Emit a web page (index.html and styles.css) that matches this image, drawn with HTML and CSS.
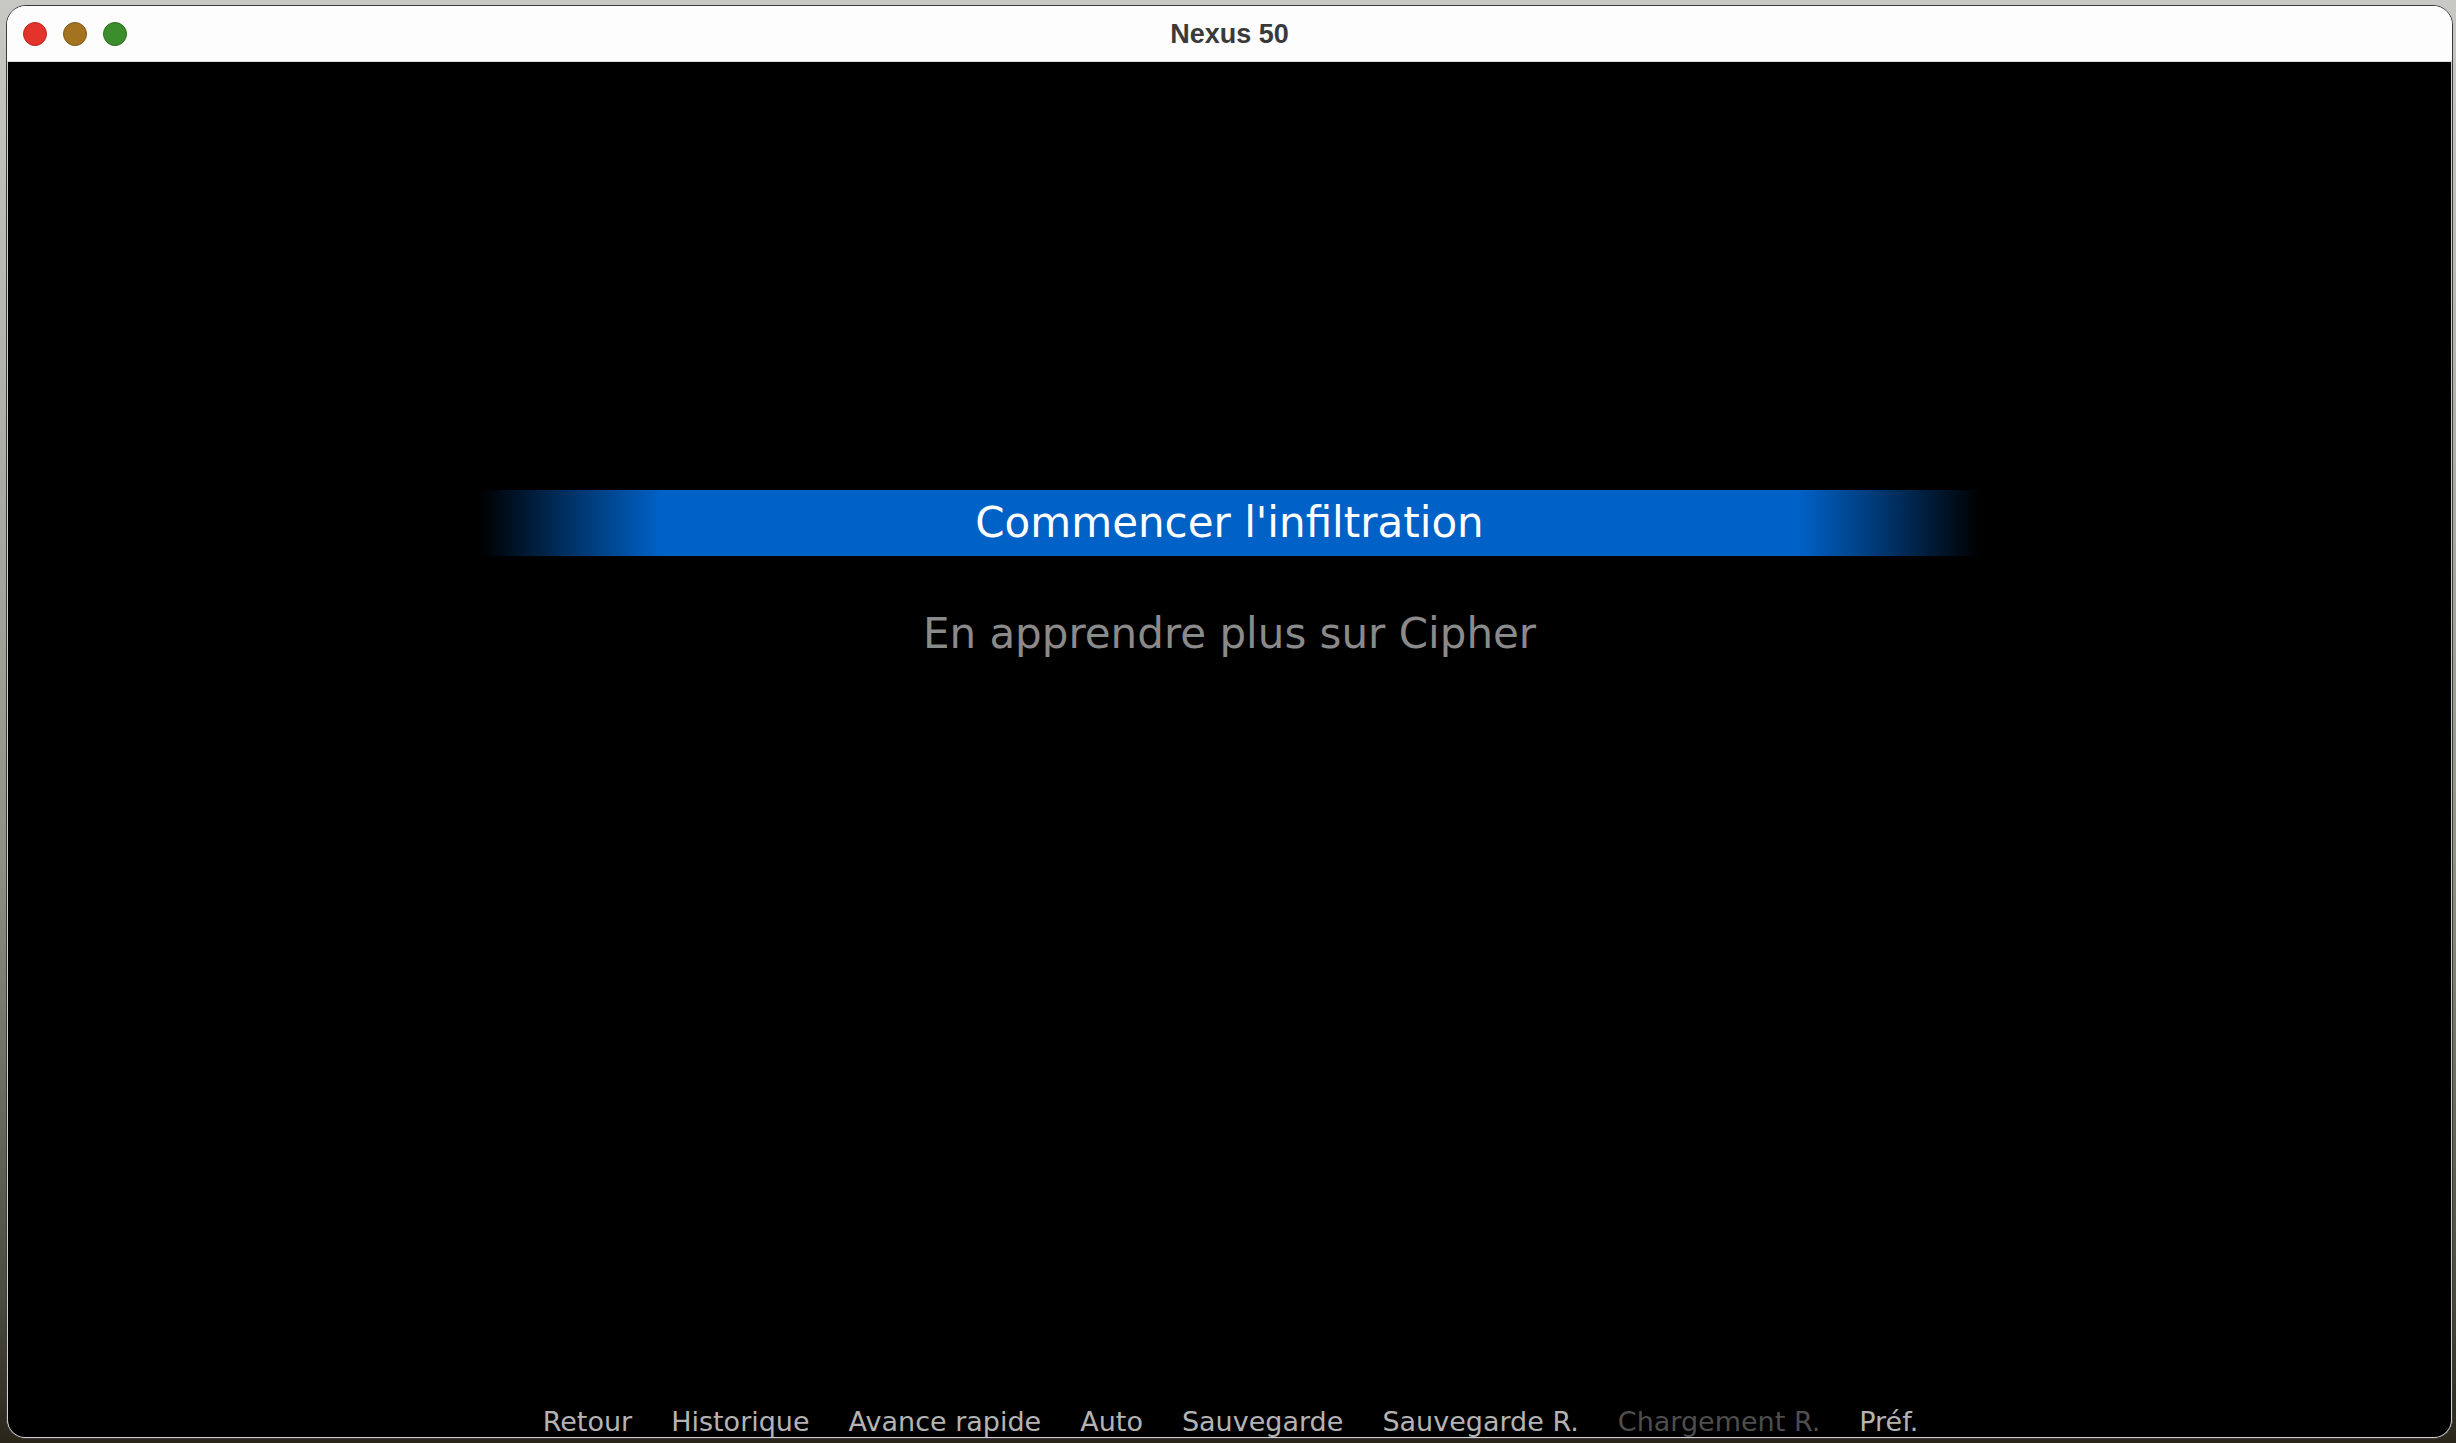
FILE: index.html
```html
<!DOCTYPE html>
<html lang="fr">
<head>
<meta charset="utf-8">
<title>Nexus 50</title>
<link rel="stylesheet" href="styles.css">
</head>
<body>
<div class="window">
  <div class="titlebar">
    <div class="lights">
      <span class="light red"></span>
      <span class="light yellow"></span>
      <span class="light green"></span>
    </div>
    <div class="title">Nexus 50</div>
    <div class="spacer"></div>
  </div>
  <div class="content">
    <div class="choices">
      <div class="choice selected">Commencer l'infiltration</div>
      <div class="choice">En apprendre plus sur Cipher</div>
    </div>
    <div class="quickmenu">
      <span class="qm">Retour</span>
      <span class="qm">Historique</span>
      <span class="qm">Avance rapide</span>
      <span class="qm">Auto</span>
      <span class="qm">Sauvegarde</span>
      <span class="qm">Sauvegarde R.</span>
      <span class="qm disabled">Chargement R.</span>
      <span class="qm">Préf.</span>
    </div>
  </div>
</div>
</body>
</html>
```

FILE: styles.css
```css
html, body {
  margin: 0;
  padding: 0;
}
body {
  width: 2456px;
  height: 1443px;
  overflow: hidden;
  background: linear-gradient(to bottom, #c8c9c4 0%, #a9aba3 35%, #8d9183 60%, #4a4a3e 90%, #2a2619 100%);
  font-family: "DejaVu Sans", sans-serif;
}
.window {
  box-sizing: border-box;
  margin: 5px 0 0 6px;
  width: 2447px;
  height: 1434px;
  border: 1px solid #3a3a3a;
  border-radius: 20px;
  overflow: hidden;
  display: flex;
  flex-direction: column;
  background: #fdfdfd;
}
.titlebar {
  box-sizing: border-box;
  height: 56px;
  flex: 0 0 56px;
  background: #fdfdfd;
  border-bottom: 1px solid #dadada;
  display: grid;
  grid-template-columns: 1fr auto 1fr;
  align-items: center;
}
.lights {
  display: flex;
  gap: 16px;
  padding-left: 16px;
  padding-top: 1px;
}
.light {
  box-sizing: border-box;
  width: 24px;
  height: 24px;
  border-radius: 50%;
}
.red { background: #e2342a; border: 1px solid #b8271f; }
.yellow { background: #a37322; border: 1px solid #7d5717; }
.green { background: #3c8e2c; border: 1px solid #2b6b1f; }
.title {
  font-family: "Liberation Sans", Arial, sans-serif;
  font-weight: bold;
  font-size: 27px;
  color: #3a3a3a;
  padding-top: 1px;
}
.content {
  flex: 1 1 auto;
  box-sizing: border-box;
  background: #000;
  border: 1px solid #cfcfcf;
  border-top: none;
  border-radius: 0 0 18px 18px;
  display: flex;
  flex-direction: column;
  align-items: center;
}
.choices {
  padding-top: 428px;
  display: flex;
  flex-direction: column;
  align-items: center;
  gap: 45px;
}
.choice {
  width: 1500px;
  height: 66px;
  line-height: 66px;
  text-align: center;
  font-size: 42px;
  color: #8a8a8a;
}
.choice.selected {
  color: #ffffff;
  background: linear-gradient(to right, rgba(0, 97, 198, 0) 0%, rgba(0, 97, 198, 0.25) 3%, rgba(0, 97, 198, 0.6) 7%, #0061c6 12%, #0061c6 88%, rgba(0, 97, 198, 0.6) 93%, rgba(0, 97, 198, 0.25) 97%, rgba(0, 97, 198, 0) 100%);
}
.quickmenu {
  margin-top: auto;
  display: flex;
  gap: 39px;
  font-size: 27px;
  line-height: 30px;
  color: #b4b4b4;
  padding-left: 2px;
}
.qm.disabled {
  color: #4e4e4e;
}
```
